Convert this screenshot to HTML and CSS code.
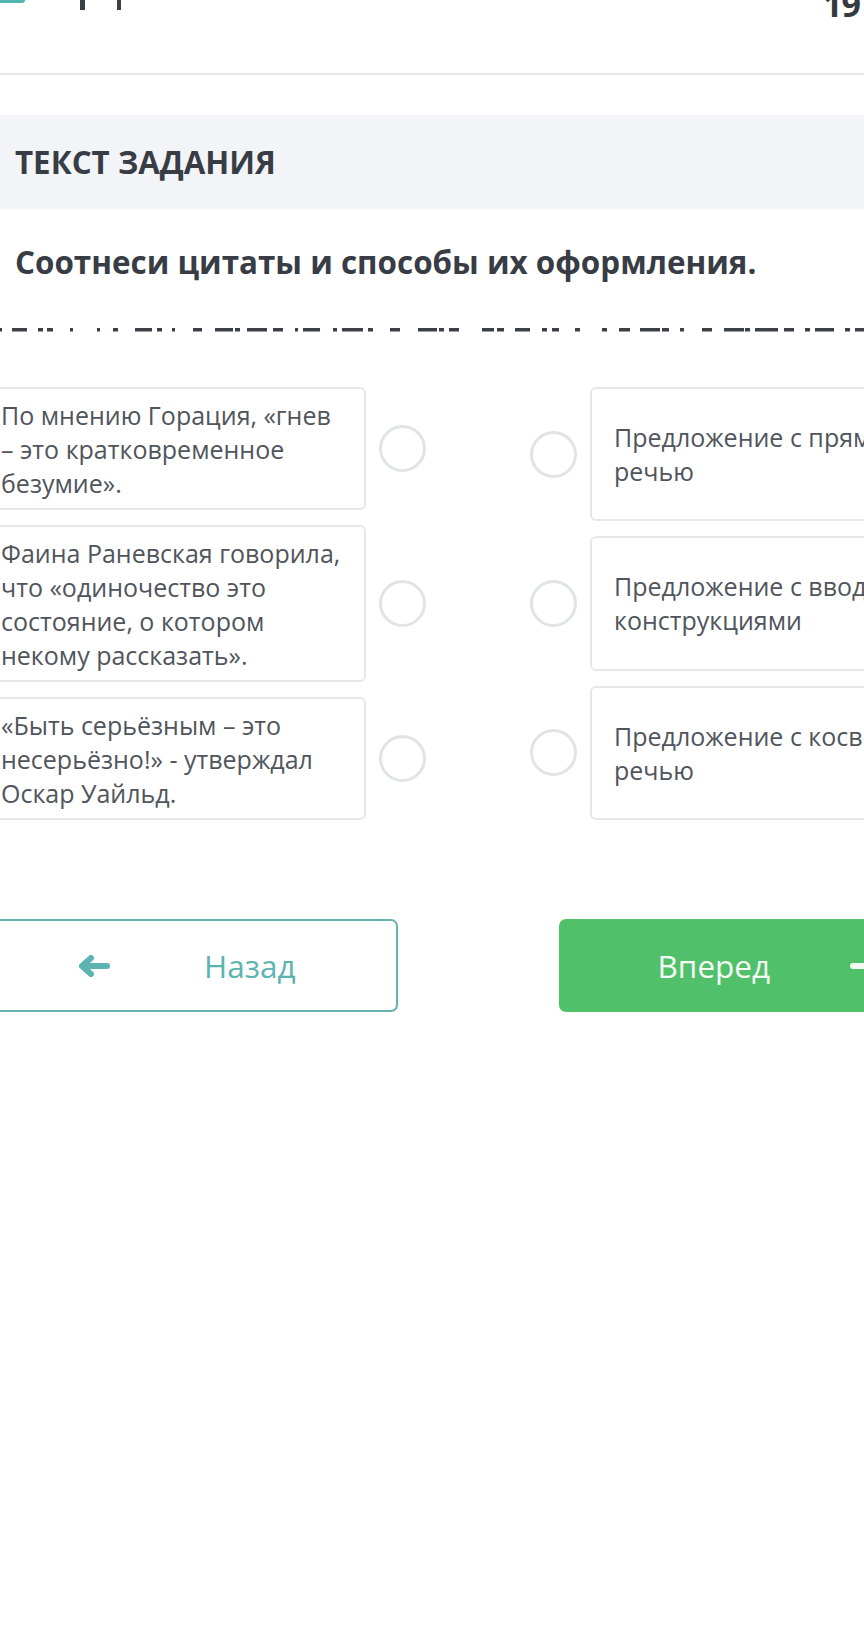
FILE: index.html
```html
<!DOCTYPE html>
<html lang="ru">
<head>
<meta charset="utf-8">
<title>Текст задания</title>
<link rel="stylesheet" href="styles.css">
</head>
<body>
<div class="page">
  <header class="topbar">
    <span class="logo-tail"></span>
    <span class="stem stem-a"></span>
    <span class="stem stem-b"></span>
    <span class="counter">19</span>
  </header>

  <div class="task-label">ТЕКСТ ЗАДАНИЯ</div>
  <h1 class="question">Соотнеси цитаты и способы их оформления.</h1>

  <svg class="divider" width="1002" height="4" viewBox="0 0 1002 4" aria-hidden="true">
    <path d="M23 1.8 H1002" stroke="#3c4148" stroke-width="3.4" fill="none"
      stroke-dasharray="2 10 15 11 5 4 6 17 3 24 3 13 5 17 17 5 5 10 3 18 9 13 18 2 5 7 20 6 10 12 3 5 17 13 4 5 21 5 5 17 10 18 19 2 5 5 10 23 12 3 7 11 15 12 5 5 7 16 5 22 5 12 11 10 20 2 7 11 4 18 10 12 20 1 5 5 23 6 10 11 5 5 19 11 5 5 9 20"/>
  </svg>

  <div class="match">
    <div class="col col-left">
      <div class="pair">
        <div class="card">По мнению Горация, «гнев – это кратковременное безумие».</div>
        <span class="radio"></span>
      </div>
      <div class="pair">
        <div class="card">Фаина Раневская говорила, что «одиночество это состояние, о котором некому рассказать».</div>
        <span class="radio"></span>
      </div>
      <div class="pair">
        <div class="card">«Быть серьёзным – это несерьёзно!» - утверждал Оскар Уайльд.</div>
        <span class="radio"></span>
      </div>
    </div>
    <div class="col col-right">
      <div class="pair">
        <span class="radio"></span>
        <div class="card card-center">Предложение с прямой речью</div>
      </div>
      <div class="pair">
        <span class="radio"></span>
        <div class="card card-center">Предложение с вводными конструкциями</div>
      </div>
      <div class="pair">
        <span class="radio"></span>
        <div class="card card-center">Предложение с косвенной речью</div>
      </div>
    </div>
  </div>

  <div class="nav">
    <button class="btn btn-back" type="button">
      <svg class="arrow" width="32" height="22" viewBox="0 0 32 22" aria-hidden="true">
        <path d="M12 3 L3 11 L12 19 M3 11 H28" fill="none" stroke="currentColor" stroke-width="6" stroke-linecap="round" stroke-linejoin="round"/>
      </svg>
      <span>Назад</span>
    </button>
    <button class="btn btn-next" type="button">
      <span>Вперед</span>
      <svg class="arrow" width="32" height="22" viewBox="0 0 32 22" aria-hidden="true">
        <path d="M20 3 L29 11 L20 19 M29 11 H4" fill="none" stroke="currentColor" stroke-width="6" stroke-linecap="round" stroke-linejoin="round"/>
      </svg>
    </button>
  </div>
</div>
</body>
</html>
```

FILE: styles.css
```css
html, body {
  margin: 0;
  padding: 0;
  background: #ffffff;
}

body {
  width: 864px;
  overflow: hidden;
  font-family: "Open Sans", "Noto Sans", "Liberation Sans", sans-serif;
  color: #383d45;
}

.page {
  width: 1002px;
  margin-left: -23px;
}

/* top bar (scrolled, only its bottom is visible) */
.topbar {
  display: flex;
  align-items: flex-start;
  height: 73px;
  padding-left: 23px;
  padding-right: 119px;
  border-bottom: 2px solid #e5e6e9;
}

.logo-tail {
  width: 25px;
  height: 3px;
  background: #4fb6b0;
  border-bottom-right-radius: 3px;
}

.stem {
  width: 5px;
  height: 10px;
  background: #3b4047;
}

.stem-a {
  margin-left: 55px;
}

.stem-b {
  width: 4px;
  margin-left: 32px;
}

.counter {
  margin-left: auto;
  margin-top: -13px;
  font-size: 34px;
  line-height: 34px;
  font-weight: 700;
  letter-spacing: -1px;
  color: #353a41;
}

/* task label band */
.task-label {
  margin-top: 40px;
  padding: 26.5px 38px;
  background: #f3f4f7;
  font-size: 31.3px;
  line-height: 41px;
  font-weight: 700;
  color: #383d45;
}

.question {
  margin: 32px 0 0;
  padding-left: 38px;
  font-size: 31.4px;
  line-height: 41px;
  font-weight: 700;
  color: #383d45;
}

.divider {
  display: block;
  margin-top: 46px;
}

/* matching area */
.match {
  display: grid;
  grid-template-columns: 1fr 1fr;
  column-gap: 104px;
  margin-top: 55px;
}

.col {
  display: flex;
  flex-direction: column;
  gap: 15px;
}

.pair {
  display: flex;
  align-items: center;
  gap: 13px;
}

.col-right .pair {
  flex: 1;
}

.card {
  flex: 1;
  box-sizing: border-box;
  padding: 8.5px 19px 8.5px 22px;
  border: 2px solid #e5e7ea;
  border-radius: 6px;
  font-size: 25px;
  line-height: 34px;
  color: #50555c;
}

.card-center {
  align-self: stretch;
  display: flex;
  align-items: center;
}

.radio {
  flex: none;
  width: 41px;
  height: 41px;
  border: 3px solid #e1e3e6;
  border-radius: 50%;
}

/* navigation buttons */
.nav {
  display: grid;
  grid-template-columns: 1fr 1fr;
  column-gap: 161px;
  margin-top: 99px;
}

.btn {
  display: flex;
  align-items: center;
  justify-content: space-between;
  box-sizing: border-box;
  height: 93px;
  padding: 0 100px 0 100px;
  border-radius: 7px;
  font-family: "Open Sans", "Noto Sans", "Liberation Sans", sans-serif;
  font-size: 31.5px;
  cursor: pointer;
}

.btn-back {
  background: #ffffff;
  border: 2px solid #66b4b1;
  color: #5cb4b0;
}

.btn-next {
  background: #51c06a;
  border: 2px solid #51c06a;
  color: #f4fbf5;
  padding-left: 97px;
  padding-right: 96px;
}

.arrow {
  display: block;
  flex: none;
}
```
